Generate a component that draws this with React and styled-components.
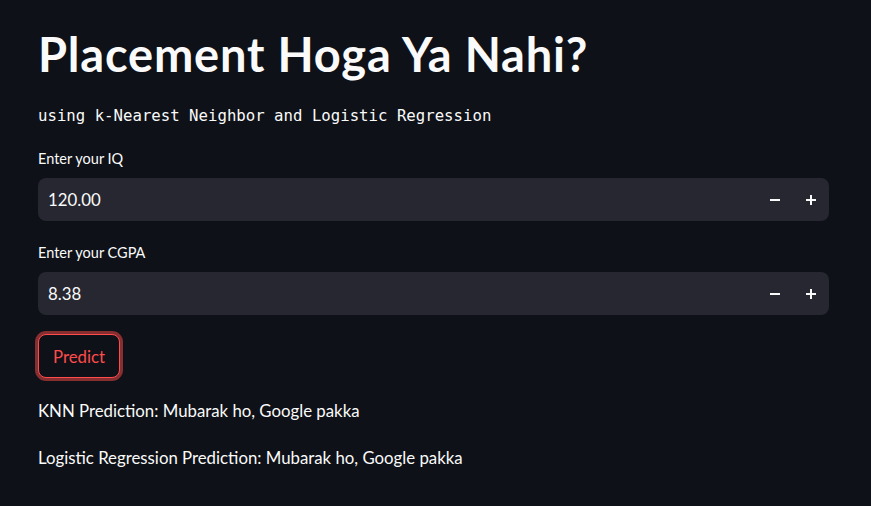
import React from "react";
import styled, { createGlobalStyle } from "styled-components";

const GlobalStyle = createGlobalStyle`
    html, body {
        margin: 0;
        padding: 0;
        background: #0e1117;
    }
    body {
        font-family: Lato, "Noto Sans", sans-serif;
        color: #fafafa;
    }
`

const Page = styled.div`
    min-height: 506px;
    background: #0e1117;
    padding: 21px 42px 0 38px;
    box-sizing: border-box;
    display: flex;
    flex-direction: column;
`

const Title = styled.h1`
    margin: 0;
    font-size: 47px;
    font-weight: 700;
    line-height: 66px;
    color: #fafafa;
    letter-spacing: 0.8px;
`

const Subtitle = styled.p`
    margin: 19px 0 0;
    font-family: "DejaVu Sans Mono", "Liberation Mono", monospace;
    font-size: 15.7px;
    line-height: 20px;
    color: #fafafa;
`

const Field = styled.div`
    display: flex;
    flex-direction: column;
    margin-top: ${props => props.first ? "23px" : "22px"};
`

const Label = styled.label`
    font-size: 14.5px;
    line-height: 20px;
    color: #fafafa;
    margin-bottom: 9px;
`

const InputBox = styled.div`
    display: flex;
    align-items: center;
    height: 43px;
    background: #262730;
    border-radius: 8px;
    padding-left: 10px;
`

const Value = styled.span`
    flex: 1;
    font-size: 16.8px;
    color: #fafafa;
`

const StepButton = styled.button`
    width: 36px;
    height: 43px;
    border: 0;
    background: transparent;
    color: #fafafa;
    display: flex;
    align-items: center;
    justify-content: center;
    padding: 0;
`

const PredictButton = styled.button`
    align-self: flex-start;
    margin-top: 19px;
    height: 44px;
    padding: 0 14px;
    background: #0e1117;
    border: 1px solid #ff4b4b;
    border-radius: 8px;
    box-shadow: 0 0 0 3px rgba(255, 75, 75, 0.5);
    color: #ff4b4b;
    font-family: Lato, "Noto Sans", sans-serif;
    font-size: 16.8px;
`

const Result = styled.p`
    margin: ${props => props.first ? "21px" : "23px"} 0 0;
    font-size: 16.8px;
    line-height: 24px;
    color: #fafafa;
`

const Minus = () => (
    <svg width="12" height="12" viewBox="0 0 12 12">
        <rect x="1" y="5" width="10" height="2" fill="#fafafa" />
    </svg>
)

const Plus = () => (
    <svg width="12" height="12" viewBox="0 0 12 12">
        <rect x="1" y="5" width="10" height="2" fill="#fafafa" />
        <rect x="5" y="1" width="2" height="10" fill="#fafafa" />
    </svg>
)

const NumberInput = ({ label, value, first }) => (
    <Field first={first}>
        <Label>{label}</Label>
        <InputBox>
            <Value>{value}</Value>
            <StepButton><Minus /></StepButton>
            <StepButton><Plus /></StepButton>
        </InputBox>
    </Field>
)

export default function App() {
    return (
        <>
            <GlobalStyle />
            <Page>
                <Title>Placement Hoga Ya Nahi?</Title>
                <Subtitle>using k-Nearest Neighbor and Logistic Regression</Subtitle>
                <NumberInput first label="Enter your IQ" value="120.00" />
                <NumberInput label="Enter your CGPA" value="8.38" />
                <PredictButton>Predict</PredictButton>
                <Result first>KNN Prediction: Mubarak ho, Google pakka</Result>
                <Result>Logistic Regression Prediction: Mubarak ho, Google pakka</Result>
            </Page>
        </>
    )
}
